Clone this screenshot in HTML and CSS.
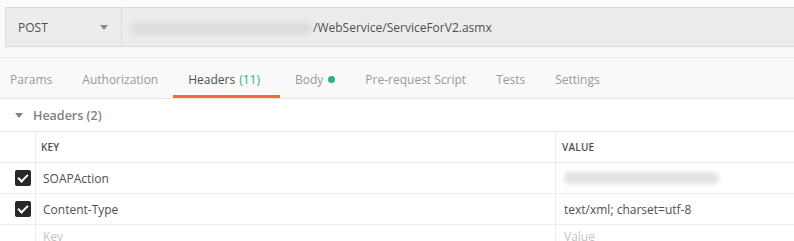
FILE: index.html
```html
<!DOCTYPE html>
<html lang="en">
<head>
    <meta charset="UTF-8">
    <title>Request</title>
    <link rel="stylesheet" href="styles.css">
</head>
<body>

    <!-- Request bar -->
    <div class="request-bar">
        <div class="method">
            <span>POST</span>
            <span class="caret"></span>
        </div>
        <div class="url">
            <span class="blurred url-blur"></span>
            <span class="url-text">/WebService/ServiceForV2.asmx</span>
        </div>
    </div>

    <!-- Tabs -->
    <div class="tabs">
        <div class="tab">Params</div>
        <div class="tab">Authorization</div>
        <div class="tab active">Headers <span class="count">(11)</span></div>
        <div class="tab">Body <span class="dot"></span></div>
        <div class="tab">Pre-request Script</div>
        <div class="tab">Tests</div>
        <div class="tab">Settings</div>
    </div>

    <div class="section-title">
        <span class="triangle"></span>
        Headers (2)
    </div>

    <!-- Headers table -->
    <div class="table">
        <div class="row head">
            <div class="cell check"></div>
            <div class="cell key">KEY</div>
            <div class="cell value">VALUE</div>
        </div>
        <div class="row">
            <div class="cell check"><span class="checkbox"></span></div>
            <div class="cell key">SOAPAction</div>
            <div class="cell value"><span class="blurred value-blur"></span></div>
        </div>
        <div class="row">
            <div class="cell check"><span class="checkbox"></span></div>
            <div class="cell key">Content-Type</div>
            <div class="cell value">text/xml; charset=utf-8</div>
        </div>
        <div class="row empty">
            <div class="cell check"></div>
            <div class="cell key">Key</div>
            <div class="cell value">Value</div>
        </div>
    </div>

</body>
</html>
```

FILE: styles.css
```css
* {
    margin: 0;
    padding: 0;
    box-sizing: border-box;
}

body {
    font-family: 'Open Sans', sans-serif;
    font-size: 12px;
    color: #505050;
    background: #fff;
    overflow: hidden;
}

/* Request bar */
.request-bar {
    display: flex;
    background: #fafafa;
    padding: 7px 0 10px 5px;
    border-bottom: 1px solid #ececec;
}

.method {
    width: 117px;
    height: 40px;
    display: flex;
    align-items: center;
    justify-content: space-between;
    padding: 0 13px 0 12px;
    background: #ececec;
    border: 1px solid #d9d9d9;
    border-right: 1px solid #dcdcdc;
    border-radius: 2px 0 0 2px;
    color: #505050;
}

.caret {
    width: 0;
    height: 0;
    border-left: 4px solid transparent;
    border-right: 4px solid transparent;
    border-top: 5px solid #8a8a8a;
}

.url {
    flex: 1;
    height: 40px;
    display: flex;
    align-items: center;
    padding-left: 8px;
    background: #ececec;
    border-top: 1px solid #d9d9d9;
    border-bottom: 1px solid #d9d9d9;
}

.blurred {
    display: inline-block;
    background: #dddddd;
    border-radius: 8px;
    filter: blur(2px);
}

.url-blur {
    width: 182px;
    height: 13px;
    margin-top: 2px;
}

.url-text {
    margin-left: 1px;
}

/* Tabs */
.tabs {
    display: flex;
    background: #f9f9f9;
    border-bottom: 1px solid #e6e6e6;
    height: 41px;
}

.tab {
    display: flex;
    align-items: center;
    padding: 6px 15px 0;
    color: #9a9a9a;
    border-bottom: 3px solid transparent;
}

.tab:first-child {
    padding-left: 10px;
}

.tab.active {
    color: #505050;
    border-bottom-color: #f26b3a;
    padding-right: 20px;
}

.count {
    color: #26b47f;
    margin-left: 4px;
}

.dot {
    width: 7px;
    height: 7px;
    border-radius: 50%;
    background: #26b47f;
    margin-left: 5px;
}

/* Section title */
.section-title {
    display: flex;
    align-items: center;
    height: 32px;
    padding-left: 15px;
    font-size: 12.5px;
    color: #808080;
    font-weight: 600;
}

.triangle {
    width: 0;
    height: 0;
    border-left: 4px solid transparent;
    border-right: 4px solid transparent;
    border-top: 5px solid #808080;
    margin-right: 10px;
}

/* Table */
.table {
    border-top: 1px solid #ececec;
}

.row {
    display: flex;
    height: 31px;
    border-bottom: 1px solid #ececec;
}

.cell {
    display: flex;
    align-items: center;
}

.cell.check {
    width: 36px;
    justify-content: center;
    padding-left: 10px;
    border-right: 1px solid #ececec;
}

.cell.key {
    width: 520px;
    padding-left: 7px;
    border-right: 1px solid #ececec;
}

.cell.value {
    flex: 1;
    padding-left: 8px;
}

.row.head .cell {
    font-size: 10px;
    font-weight: 600;
    color: #505050;
    letter-spacing: 0.2px;
}

.row.head .cell.key { padding-left: 5px; }
.row.head .cell.value { padding-left: 6px; }

.row.empty {
    height: 20px;
    border-bottom: none;
}

.row.empty .cell {
    color: #c4c4c4;
    align-items: flex-end;
}

.checkbox {
    position: relative;
    width: 16px;
    height: 16px;
    border-radius: 2px;
    background: #282828;
}

.checkbox::after {
    content: '';
    position: absolute;
    left: 5px;
    top: 2px;
    width: 4px;
    height: 8px;
    border-right: 2px solid #fff;
    border-bottom: 2px solid #fff;
    transform: rotate(45deg);
}

.value-blur {
    width: 155px;
    height: 12px;
    background: #e2e2e2;
}
```
